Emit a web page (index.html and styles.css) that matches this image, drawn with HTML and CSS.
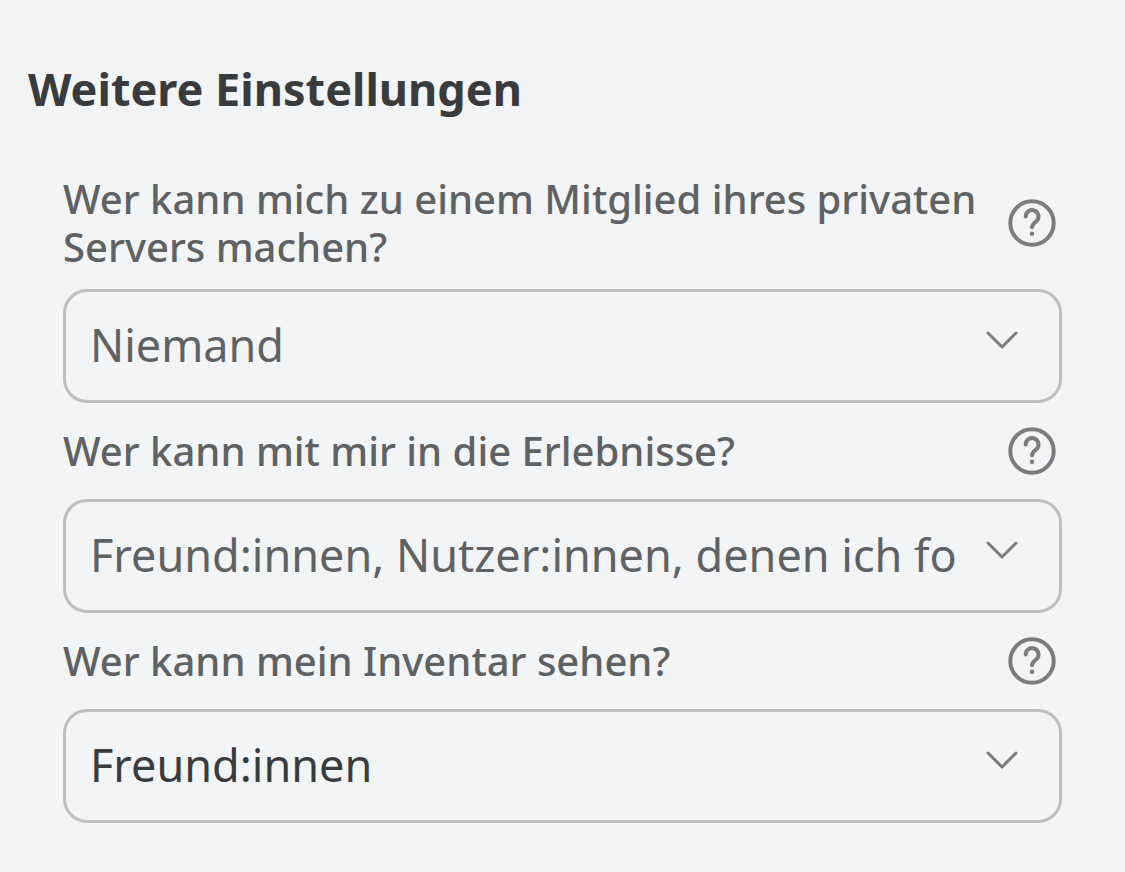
FILE: index.html
```
<!DOCTYPE html>
<html lang="de">
<head>
  <meta charset="UTF-8" />
  <meta name="viewport" content="width=device-width, initial-scale=1.0"/>
  <title>Weitere Einstellungen</title>
  <link rel="stylesheet" href="styles.css">
</head>
<body>
  <main class="container">
    <h1>Weitere Einstellungen</h1>

    <div class="settings">
      <div class="setting">
        <div class="setting-head">
          <label for="server">Wer kann mich zu einem Mitglied ihres privaten Servers machen?</label>
          <button class="help" type="button" aria-label="Hilfe">
            <svg viewBox="0 0 48 48"><circle cx="24" cy="24" r="21.700"/><path d="M17.700 17.500a6.400 6.400 0 1 1 10.800 4.600c-2.300 2.200-4.500 3.200-4.500 6.200"/><circle class="dot" cx="24" cy="34.700" r="2.300"/></svg>
          </button>
        </div>
        <div class="select-box">
          <select id="server" disabled>
            <option>Niemand</option>
          </select>
          <svg class="chevron" viewBox="0 0 32 20"><path d="M2 2l14 14L30 2"/></svg>
        </div>
      </div>

      <div class="setting">
        <div class="setting-head">
          <label for="erlebnisse">Wer kann mit mir in die Erlebnisse?</label>
          <button class="help" type="button" aria-label="Hilfe">
            <svg viewBox="0 0 48 48"><circle cx="24" cy="24" r="21.700"/><path d="M17.700 17.500a6.400 6.400 0 1 1 10.800 4.600c-2.300 2.200-4.500 3.200-4.500 6.200"/><circle class="dot" cx="24" cy="34.700" r="2.300"/></svg>
          </button>
        </div>
        <div class="select-box">
          <select id="erlebnisse" disabled>
            <option>Freund:innen, Nutzer:innen, denen ich fo</option>
          </select>
          <svg class="chevron" viewBox="0 0 32 20"><path d="M2 2l14 14L30 2"/></svg>
        </div>
      </div>

      <div class="setting">
        <div class="setting-head">
          <label for="inventar">Wer kann mein Inventar sehen?</label>
          <button class="help" type="button" aria-label="Hilfe">
            <svg viewBox="0 0 48 48"><circle cx="24" cy="24" r="21.700"/><path d="M17.700 17.500a6.400 6.400 0 1 1 10.800 4.600c-2.300 2.200-4.500 3.200-4.500 6.200"/><circle class="dot" cx="24" cy="34.700" r="2.300"/></svg>
          </button>
        </div>
        <div class="select-box">
          <select id="inventar">
            <option>Freund:innen</option>
            <option>Niemand</option>
          </select>
          <svg class="chevron" viewBox="0 0 32 20"><path d="M2 2l14 14L30 2"/></svg>
        </div>
      </div>
    </div>
  </main>
</body>
</html>
```
FILE: styles.css
```
* {
  box-sizing: border-box;
}
body {
  margin: 0;
  background: #f2f4f6;
  color: #393b3d;
  font-family: "Noto Sans", "Open Sans", sans-serif;
}
.container {
  padding: 59px 28px 48px;
}
h1 {
  margin: 0;
  font-size: 45px;
  line-height: 60px;
  font-weight: 700;
}
.settings {
  padding: 56px 35px 0;
}
.setting-head {
  display: flex;
  align-items: center;
  justify-content: space-between;
  gap: 24px;
  min-height: 96px;
  padding-bottom: 18px;
}
.setting + .setting .setting-head {
  padding-top: 18px;
}
label {
  font-size: 40px;
  line-height: 48px;
  font-weight: 500;
  color: #606162;
}
.help {
  flex: none;
  width: 48px;
  height: 48px;
  margin-right: 6px;
  padding: 0;
  border: none;
  background: none;
  cursor: pointer;
}
.help svg {
  display: block;
  fill: none;
  stroke: #7b7c7d;
  stroke-width: 4;
  stroke-linecap: round;
}
.help .dot {
  fill: #7b7c7d;
  stroke: none;
}
.select-box {
  display: grid;
  align-items: center;
}
select {
  grid-area: 1 / 1;
  width: 100%;
  height: 114px;
  padding: 0 96px 4px 24px;
  border: 3px solid #bdbebe;
  border-radius: 24px;
  background: transparent;
  color: #393b3d;
  font-family: inherit;
  font-size: 45px;
  appearance: none;
}
select:disabled {
  color: #606162;
  opacity: 1;
}
.chevron {
  grid-area: 1 / 1;
  justify-self: end;
  width: 32px;
  height: 20px;
  margin: 0 44px 10px 0;
  fill: none;
  stroke: #7b7c7d;
  stroke-width: 3;
  stroke-linecap: round;
  stroke-linejoin: round;
  pointer-events: none;
}
```
